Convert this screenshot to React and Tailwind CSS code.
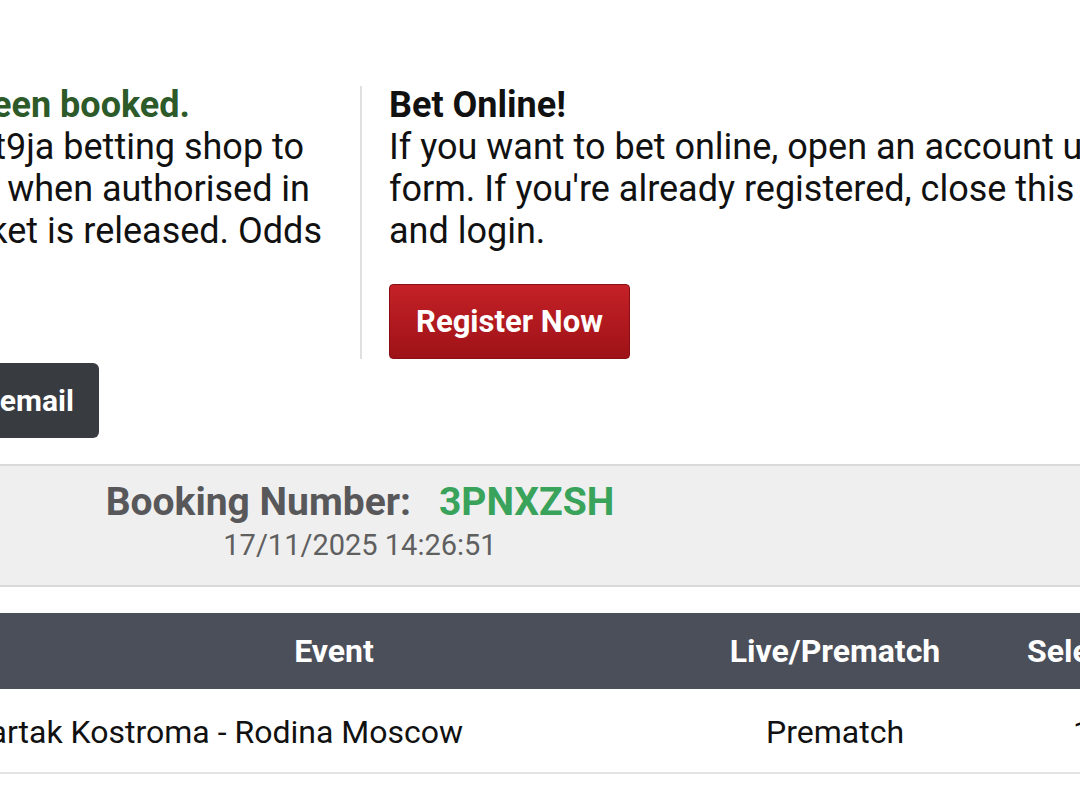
export default function App() {
  return (
    <div className="w-[1080px] h-[787px] overflow-hidden bg-white font-['Roboto',sans-serif] text-[#111]">
      <div className="h-[86px]" />
      <div className="flex">
        <div className="w-[362px] shrink-0 border-r-2 border-[#e0e0e0] text-[36px] leading-[42px]">
          <div className="flex justify-end pr-[170px] h-[40px] items-end">
            <span className="whitespace-nowrap font-bold text-[#2c5a29]">Your bet has been booked.</span>
          </div>
          <div className="flex justify-end pr-[56px]">
            <span className="whitespace-nowrap">Take this number to any Bet9ja betting shop to</span>
          </div>
          <div className="flex justify-end pr-[50px]">
            <span className="whitespace-nowrap">when authorised in</span>
          </div>
          <div className="flex justify-end pr-[38px]">
            <span className="whitespace-nowrap">once the ticket is released. Odds</span>
          </div>
          <div className="h-[104px]" />
        </div>
        <div className="pl-[27px] text-[36px] leading-[42px]">
          <div className="h-[40px] flex items-end font-bold whitespace-nowrap">Bet Online!</div>
          <div className="whitespace-nowrap">If you want to bet online, open an account using the registration</div>
          <div className="whitespace-nowrap">form. If you're already registered, close this window</div>
          <div className="whitespace-nowrap">and login.</div>
          <button className="mt-[32px] w-[241px] h-[75px] rounded-[4px] border border-[#8a0f14] bg-gradient-to-b from-[#c42127] to-[#9e1217] text-white font-bold text-[31px]">
            Register Now
          </button>
        </div>
      </div>
      <div className="flex justify-end w-[99px] mt-[4px]">
        <button className="shrink-0 whitespace-nowrap h-[75px] px-[25px] rounded-[6px] bg-[#383b3f] text-white font-bold text-[30px]">
          Send via email
        </button>
      </div>
      <div className="mt-[26px] border-y-2 border-[#d9d9d9] bg-[#efefef] h-[123px] pt-[11px]">
        <div className="w-[720px] text-center">
          <div className="text-[39px] leading-[50px] font-bold text-[#58585a]">
            Booking Number:<span className="ml-[28px] text-[#3aa35b]">3PNXZSH</span>
          </div>
          <div className="text-[29px] leading-[36px] text-[#5f5f5f]">17/11/2025 14:26:51</div>
        </div>
      </div>
      <div className="mt-[26px] flex h-[76px] items-center bg-[#4a4f5a] text-white font-bold text-[32px]">
        <div className="w-[668px] shrink-0 text-center">Event</div>
        <div className="w-[334px] shrink-0 text-center">Live/Prematch</div>
        <div className="shrink-0 pl-[25px] whitespace-nowrap">Selection</div>
      </div>
      <div className="flex h-[85px] items-center pt-[3px] border-b-2 border-[#e3e3e3] text-[32px] text-[#111]">
        <div className="w-[668px] shrink-0">
          <div className="w-[463px] flex justify-end">
            <span className="whitespace-nowrap">Spartak Kostroma - Rodina Moscow</span>
          </div>
        </div>
        <div className="w-[334px] shrink-0 text-center">Prematch</div>
        <div className="shrink-0 pl-[71px]">1</div>
      </div>
    </div>
  );
}
